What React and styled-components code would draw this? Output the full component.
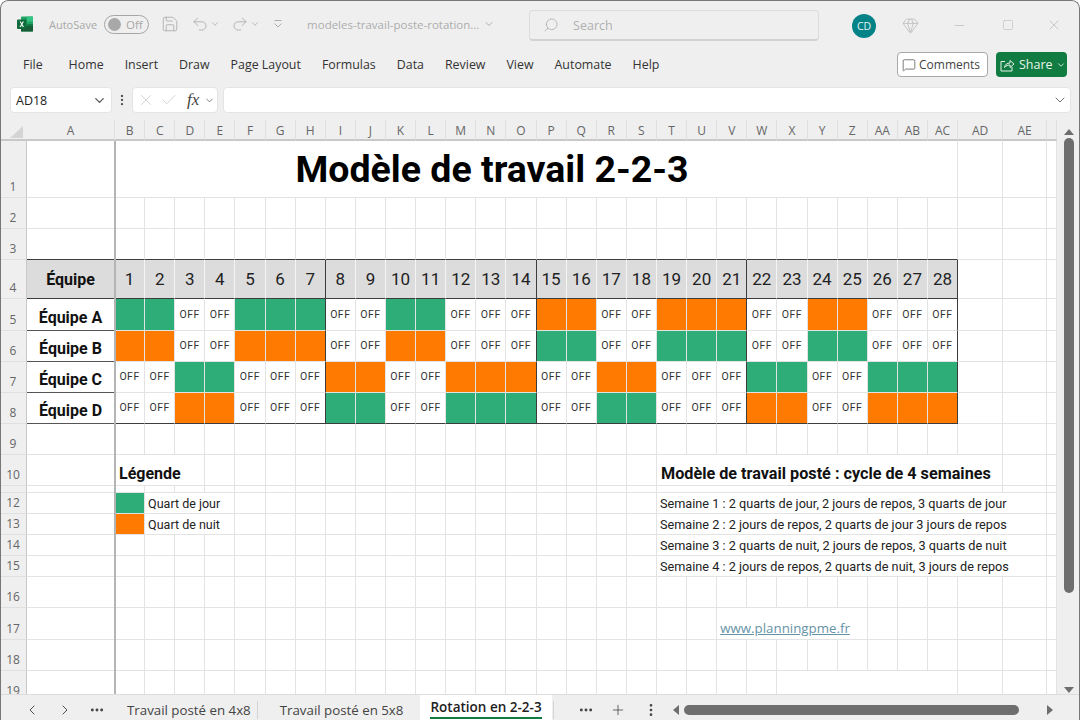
import styled, { createGlobalStyle } from 'styled-components';
import {
  Search, Save, Undo2, Redo2, ChevronDown, ChevronLeft, ChevronRight, X, Check, Minus, Square,
  Gem, MessageSquare, Plus, MoreVertical, MoreHorizontal,
} from 'lucide-react';

const UI_FONT = '"Open Sans", "Noto Sans", sans-serif';
const SHEET_FONT = 'Roboto, "Liberation Sans", sans-serif';
const GRID_LINE = '#e3e3e3';
const DARK_LINE = '#3c3c3c';
const GREEN = '#2fad78';
const ORANGE = '#ff7a00';

const GlobalStyle = createGlobalStyle`
  html, body { margin: 0; padding: 0; background: #fff; }
  * { box-sizing: border-box; }
`;

const Window = styled.div`
  position: relative;
  width: 1080px;
  height: 720px;
  overflow: hidden;
  display: flex;
  flex-direction: column;
  background: #efefef;
  font-family: ${UI_FONT};
  border-radius: 8px 8px 0 0;

  &::after {
    content: '';
    position: absolute;
    inset: 0;
    border: 1px solid #777;
    border-bottom: none;
    border-radius: 8px 8px 0 0;
    pointer-events: none;
  }
`;

const TitleBar = styled.div`
  height: 44px;
  flex: none;
  display: flex;
  align-items: center;
  padding: 4px 0 0 17px;
  color: #a9a9a9;
`;

const AutoSave = styled.span`
  font-size: 11px;
  margin-left: 16px;
  color: #a8a8a8;
`;

const Toggle = styled.div`
  width: 45px;
  height: 19px;
  margin-left: 7px;
  border: 1.5px solid #a6a6a6;
  border-radius: 10px;
  display: flex;
  align-items: center;
  gap: 5px;
  padding-left: 3px;
  font-size: 11.5px;
  color: #a8a8a8;

  &::before {
    content: '';
    width: 13px;
    height: 13px;
    border-radius: 50%;
    background: #a8a8a8;
  }
`;

const QatIcon = styled.span`
  display: inline-flex;
  align-items: center;
  margin-left: ${(p) => p.$left}px;
  color: #aeaeae;
`;

const FileName = styled.span`
  font-size: 11.5px;
  color: #adadad;
  margin-left: 24px;
  width: 176px;
  white-space: nowrap;
`;

const SearchBox = styled.div`
  width: 290px;
  height: 31px;
  margin: 3px 0 0 34px;
  border: 1px solid #dcdcdc;
  border-bottom: 2px solid #d2d2d2;
  border-radius: 4px;
  display: flex;
  align-items: center;
  gap: 14px;
  padding-left: 13px;
  font-size: 12.5px;
  color: #b0b0b0;

  svg { transform: scaleX(-1); }
`;

const Avatar = styled.div`
  width: 24px;
  height: 24px;
  margin: 4px 0 0 33px;
  border-radius: 50%;
  background: #038387;
  color: #e6f4f4;
  font-size: 10.5px;
  display: flex;
  align-items: center;
  justify-content: center;
`;

const WindowIcons = styled.div`
  display: flex;
  align-items: center;
  margin-top: 2px;
  color: #b4b4b4;
`;

const WindowIcon = styled.span`
  display: inline-flex;
  margin-left: ${(p) => p.$left}px;
`;

const MenuBar = styled.div`
  height: 40px;
  flex: none;
  display: flex;
  align-items: center;
  padding: 1px 13px 0 23px;
`;

const MenuItem = styled.span`
  font-size: 12.4px;
  color: #333;
  margin-right: ${(p) => p.$gap ?? 21}px;
`;

const MenuActions = styled.div`
  margin-left: auto;
  display: flex;
  gap: 8px;
`;

const CommentsButton = styled.div`
  width: 91px;
  height: 25px;
  background: #fff;
  border: 1px solid #a8a8a8;
  border-radius: 4px;
  display: flex;
  align-items: center;
  gap: 3px;
  padding-left: 4px;
  font-size: 12px;
  color: #444;
`;

const ShareButton = styled.div`
  width: 71px;
  height: 25px;
  background: #107c41;
  border-radius: 4px;
  display: flex;
  align-items: center;
  gap: 3px;
  padding-left: 2px;
  font-size: 12.5px;
  color: #e8f3ec;
`;

const FormulaBar = styled.div`
  height: 36px;
  flex: none;
  display: flex;
  align-items: flex-start;
  padding: 3px 9px 0 10px;
`;

const WhiteBox = styled.div`
  height: 26px;
  background: #fff;
  border: 1px solid #e4e4e4;
  border-radius: 4px;
  display: flex;
  align-items: center;
`;

const NameBox = styled(WhiteBox)`
  width: 102px;
  padding: 0 4px 0 5px;
  justify-content: space-between;
  font-size: 12.5px;
  color: #222;
`;

const Grip = styled.span`
  width: 20px;
  height: 26px;
  display: flex;
  justify-content: center;
  align-items: center;
  color: #555;
`;

const FunctionBox = styled(WhiteBox)`
  width: 86px;
  padding-left: 4px;
  gap: 5px;
  color: #c4c4c4;
`;

const FxLabel = styled.span`
  font-family: "Liberation Serif", serif;
  font-style: italic;
  font-size: 17px;
  color: #444;
  margin-left: 4px;
`;

const FormulaInput = styled(WhiteBox)`
  flex: 1;
  margin-left: 5px;
  justify-content: flex-end;
  padding-right: 2px;
  color: #666;
`;

const SheetArea = styled.div`
  flex: 1;
  min-height: 0;
  display: flex;
`;

const Sheet = styled.div`
  position: relative;
  width: 1057px;
  height: 574px;
  overflow: hidden;
  display: grid;
  grid-template-columns: 27px 88px repeat(28, 30.12px) 45px 44px 10px;
  grid-template-rows: 21px 57px 31px 31px 39px 32px 31px 31px 31px 31px 31px 7px 21px 21px 21px 21px 31px 32px 31px 31px;
  background: #fff;
  font-family: ${SHEET_FONT};
`;

const FrozenLine = styled.div`
  position: absolute;
  left: 114px;
  top: 21px;
  bottom: 0;
  width: 2px;
  background: #b4b4b4;
`;

const Corner = styled.div`
  background: #efefef;
  border-bottom: 2px solid #c8c8c8;
  padding: 6px 3px 0 10px;

  &::after {
    content: '';
    display: block;
    width: 13px;
    height: 12px;
    background: #d4d4d4;
    clip-path: polygon(100% 0, 100% 100%, 0 100%);
  }
`;

const ColHead = styled.div`
  background: #efefef;
  border-bottom: 2px solid #c8c8c8;
  border-right: 1px solid #e0e0e0;
  font-family: ${UI_FONT};
  font-size: 12px;
  color: #666;
  display: flex;
  align-items: center;
  justify-content: center;
  padding-top: 1px;
`;

const RowHead = styled.div`
  background: #efefef;
  border-bottom: 1px solid #e0e0e0;
  border-right: 1px solid #c8c8c8;
  font-family: ${UI_FONT};
  font-size: 12px;
  line-height: 14px;
  color: #666;
  display: flex;
  align-items: flex-end;
  justify-content: center;
  padding-bottom: 3px;
  overflow: hidden;
`;

const Cell = styled.div`
  grid-column: span ${(p) => p.$span || 1};
  min-width: 0;
  background: ${(p) => p.$fill || '#fff'};
  border-right: 1px solid ${(p) => p.$right || GRID_LINE};
  border-bottom: 1px solid ${(p) => p.$bottom || GRID_LINE};
  display: flex;
  align-items: center;
  justify-content: ${(p) => p.$justify || 'center'};
  padding-left: ${(p) => p.$pad || 0}px;
  white-space: nowrap;
  color: #222;
`;

const Title = styled.span`
  font-size: 37.5px;
  font-weight: 700;
  color: #000;
`;

const HeadText = styled.span`
  font-size: ${(p) => p.$size || 16}px;
  font-weight: 700;
  color: #111;
  padding-top: ${(p) => p.$top || 0}px;
`;

const DayNumber = styled.span`
  font-size: 17px;
  color: #222;
`;

const OffText = styled.span`
  font-size: 10.5px;
  letter-spacing: 0.5px;
  color: #333;
  margin-bottom: 1px;
`;

const NoteText = styled.span`
  font-size: ${(p) => p.$size || 12.5}px;
  color: #222;
`;

const SiteLink = styled.span`
  font-family: ${UI_FONT};
  font-size: 13.3px;
  color: #6593a6;
  text-decoration: underline;
  padding-top: 8px;
`;

const VScroll = styled.div`
  flex: 1;
  display: flex;
  flex-direction: column;
  align-items: center;
  padding: 9px 0 0 1px;
`;

const Arrow = styled.div`
  width: 0;
  height: 0;
  ${(p) => p.$dir === 'up' && 'border-left: 5px solid transparent; border-right: 5px solid transparent; border-bottom: 6px solid #6e6e6e;'}
  ${(p) => p.$dir === 'down' && 'border-left: 5px solid transparent; border-right: 5px solid transparent; border-top: 6px solid #6e6e6e;'}
  ${(p) => p.$dir === 'left' && 'border-top: 5px solid transparent; border-bottom: 5px solid transparent; border-right: 6px solid #6e6e6e;'}
  ${(p) => p.$dir === 'right' && 'border-top: 5px solid transparent; border-bottom: 5px solid transparent; border-left: 6px solid #6e6e6e;'}
`;

const VThumb = styled.div`
  width: 10px;
  height: 455px;
  margin-top: 3px;
  background: #6e6e6e;
  border-radius: 5px;
`;

const VDown = styled.div`
  margin-top: auto;
  margin-bottom: 1px;
`;

const TabStrip = styled.div`
  height: 26px;
  flex: none;
  display: flex;
  align-items: center;
  border-top: 1px solid #dcdcdc;
  padding-top: 4px;
`;

const NavIcon = styled.span`
  display: inline-flex;
  margin-left: ${(p) => p.$left}px;
  color: #444;
`;

const Tab = styled.span`
  font-size: 13.3px;
  color: #444;
  margin-left: ${(p) => p.$left}px;
  white-space: nowrap;
`;

const TabDivider = styled.span`
  width: 1px;
  height: 18px;
  background: #d4d4d4;
  margin-left: ${(p) => p.$left}px;
`;

const ActiveTab = styled.div`
  width: 132px;
  align-self: stretch;
  margin: -4px 0 0 17px;
  background: #fff;
  padding: 3px 0 0 10px;
  font-size: 13.5px;
  font-weight: 600;
  line-height: 18px;
  color: #222;
  white-space: nowrap;

  span {
    display: inline-block;
    height: 21px;
    border-bottom: 2px solid #107c41;
  }
`;

const HThumb = styled.div`
  width: 335px;
  height: 10px;
  margin-left: 5px;
  background: #6e6e6e;
  border-radius: 5px;
`;

const HArrow = styled.span`
  display: block;
  margin-left: ${(p) => p.$left}px;
`;

const COLUMNS = [
  'A', 'B', 'C', 'D', 'E', 'F', 'G', 'H', 'I', 'J', 'K', 'L', 'M', 'N', 'O', 'P', 'Q', 'R', 'S',
  'T', 'U', 'V', 'W', 'X', 'Y', 'Z', 'AA', 'AB', 'AC', 'AD', 'AE', '',
];

const ROW_LABELS = [1, 2, 3, 4, 5, 6, 7, 8, 9, 10, '', 12, 13, 14, 15, 16, 17, 18, 19];

// shift pattern per team, one letter per day (G = day, N = night, O = off)
const TEAMS = {
  5: { name: 'Équipe A', days: 'GGOOGGGOOGGOOONNOONNNOONNOOO' },
  6: { name: 'Équipe B', days: 'NNOONNNOONNOOOGGOOGGGOOGGOOO' },
  7: { name: 'Équipe C', days: 'OOGGOOONNOONNNOONNOOOGGOOGGG' },
  8: { name: 'Équipe D', days: 'OONNOOOGGOOGGGOOGGOOONNOONNN' },
};

const WEEK_NOTES = {
  12: 'Semaine 1 : 2 quarts de jour, 2 jours de repos, 3 quarts de jour',
  13: 'Semaine 2 : 2 jours de repos, 2 quarts de jour 3 jours de repos',
  14: 'Semaine 3 : 2 quarts de nuit, 2 jours de repos, 3 quarts de nuit',
  15: 'Semaine 4 : 2 jours de repos, 2 quarts de nuit, 3 jours de repos',
};

const isWeekEnd = (col) => col >= 7 && col <= 28 && col % 7 === 0;

function blanks(row, from, to) {
  const cells = [];
  for (let col = from; col <= to; col += 1) cells.push(<Cell key={`${row}-${col}`} />);
  return cells;
}

function tableRow(row) {
  const cells = [];
  const bottom = row === 4 || row === 8 ? DARK_LINE : undefined;
  const nameBottom = row === 4 ? DARK_LINE : '#555';
  if (row === 4) {
    cells.push(<Cell key="a" $fill="#dcdcdc" $bottom={nameBottom}><HeadText>Équipe</HeadText></Cell>);
  } else {
    cells.push(<Cell key="a" $bottom={nameBottom}><HeadText $top={5}>{TEAMS[row].name}</HeadText></Cell>);
  }
  for (let col = 1; col <= 28; col += 1) {
    const right = isWeekEnd(col) ? DARK_LINE : undefined;
    if (row === 4) {
      cells.push(
        <Cell key={col} $fill="#dcdcdc" $right={right || '#f4f4f4'} $bottom={bottom}>
          <DayNumber>{col}</DayNumber>
        </Cell>
      );
    } else {
      const shift = TEAMS[row].days[col - 1];
      const fill = shift === 'G' ? GREEN : shift === 'N' ? ORANGE : undefined;
      cells.push(
        <Cell key={col} $fill={fill} $right={right} $bottom={bottom}>
          {shift === 'O' && <OffText>OFF</OffText>}
        </Cell>
      );
    }
  }
  return cells;
}

// cells for one sheet row, merged ranges get a span
function sheetRow(row) {
  if (row >= 4 && row <= 8) {
    return [...tableRow(row), ...blanks(row, 29, 31)];
  }
  if (row === 1) {
    return [
      <Cell key="title" $span={29}><Title>Modèle de travail 2-2-3</Title></Cell>,
      ...blanks(row, 29, 31),
    ];
  }
  if (row === 10) {
    return [
      ...blanks(row, 0, 0),
      <Cell key="legend" $span={3} $justify="flex-start" $pad={4}><HeadText $top={6}>Légende</HeadText></Cell>,
      ...blanks(row, 4, 18),
      <Cell key="cycle" $span={11} $justify="flex-start" $pad={4}>
        <HeadText $top={6} $size={16.2}>Modèle de travail posté : cycle de 4 semaines</HeadText>
      </Cell>,
      ...blanks(row, 30, 31),
    ];
  }
  if (row === 11) {
    return [...blanks(row, 0, 18), <Cell key="m" $span={11} />, ...blanks(row, 30, 31)];
  }
  if (row === 12 || row === 13) {
    return [
      ...blanks(row, 0, 0),
      <Cell key="swatch" $fill={row === 12 ? GREEN : ORANGE} />,
      <Cell key="label" $span={3} $justify="flex-start" $pad={3}>
        <NoteText>{row === 12 ? 'Quart de jour' : 'Quart de nuit'}</NoteText>
      </Cell>,
      ...blanks(row, 5, 18),
      <Cell key="note" $span={12} $justify="flex-start" $pad={3}><NoteText $size={12.7}>{WEEK_NOTES[row]}</NoteText></Cell>,
      ...blanks(row, 31, 31),
    ];
  }
  if (row === 14 || row === 15) {
    return [
      ...blanks(row, 0, 18),
      <Cell key="note" $span={12} $justify="flex-start" $pad={3}><NoteText $size={12.7}>{WEEK_NOTES[row]}</NoteText></Cell>,
      ...blanks(row, 31, 31),
    ];
  }
  if (row === 17) {
    return [
      ...blanks(row, 0, 20),
      <Cell key="link" $span={5} $justify="flex-start" $pad={3}><SiteLink>www.planningpme.fr</SiteLink></Cell>,
      ...blanks(row, 26, 31),
    ];
  }
  if (row === 19) {
    return [...blanks(row, 0, 22), <Cell key="m" $span={6} />, ...blanks(row, 29, 31)];
  }
  const bottom = row === 3 ? DARK_LINE : undefined;
  return COLUMNS.map((_, col) => <Cell key={col} $bottom={col <= 28 ? bottom : undefined} />);
}

function ExcelLogo() {
  return (
    <svg width="16" height="16" viewBox="0 0 16 16">
      <rect x="4" y="0.5" width="12" height="15" rx="1" fill="#21a366" />
      <rect x="10" y="0.5" width="6" height="5" fill="#33c481" />
      <rect x="10" y="8" width="6" height="4" fill="#107c41" />
      <rect x="4" y="10" width="12" height="5.5" fill="#185c37" />
      <rect x="0" y="3.5" width="9.5" height="9.5" rx="1" fill="#0f6b3a" />
      <path d="M2.6 5.6 L4.2 8.2 L2.5 10.9 H3.8 L4.8 9.2 L5.8 10.9 H7 L5.4 8.2 L7 5.6 H5.8 L4.8 7.3 L3.8 5.6 Z" fill="#fff" />
    </svg>
  );
}

function CustomizeIcon() {
  return (
    <svg width="10" height="10" viewBox="0 0 10 10" fill="none" stroke="currentColor" strokeWidth="1">
      <path d="M1.5 1.5 H8.5" />
      <path d="M1.5 4.5 L5 8 L8.5 4.5" />
    </svg>
  );
}

function ShareIcon() {
  return (
    <svg width="18" height="16" viewBox="0 0 18 16" fill="none" stroke="#e8f3ec" strokeWidth="1">
      <path d="M7 4.5 H3 V14 H14 V10" />
      <path d="M6.5 10.5 C7 7.5 9 6 12 6 V3.5 L16 7 L12 10.5 V8 C10 8 8 8.5 6.5 10.5 Z" />
    </svg>
  );
}

export default function App() {
  return (
    <>
      <GlobalStyle />
      <Window>
        <TitleBar>
          <ExcelLogo />
          <AutoSave>AutoSave</AutoSave>
          <Toggle>Off</Toggle>
          <QatIcon $left={12}><Save size={18} strokeWidth={1.2} /></QatIcon>
          <QatIcon $left={12}><Undo2 size={18} strokeWidth={1.2} /></QatIcon>
          <QatIcon $left={1}><ChevronDown size={10} /></QatIcon>
          <QatIcon $left={11}><Redo2 size={18} strokeWidth={1.2} /></QatIcon>
          <QatIcon $left={1}><ChevronDown size={10} /></QatIcon>
          <QatIcon $left={13}><CustomizeIcon /></QatIcon>
          <FileName>modeles-travail-poste-rotation...</FileName>
          <QatIcon $left={0}><ChevronDown size={12} /></QatIcon>
          <SearchBox><Search size={16} strokeWidth={1.3} />Search</SearchBox>
          <Avatar>CD</Avatar>
          <WindowIcons>
            <WindowIcon $left={26}><Gem size={17} strokeWidth={1} /></WindowIcon>
            <WindowIcon $left={33}><Minus size={15} strokeWidth={1} /></WindowIcon>
            <WindowIcon $left={35}><Square size={12} strokeWidth={1} /></WindowIcon>
            <WindowIcon $left={32}><X size={16} strokeWidth={1} /></WindowIcon>
          </WindowIcons>
        </TitleBar>

        <MenuBar>
          <MenuItem $gap={26}>File</MenuItem>
          <MenuItem>Home</MenuItem>
          <MenuItem>Insert</MenuItem>
          <MenuItem>Draw</MenuItem>
          <MenuItem>Page Layout</MenuItem>
          <MenuItem>Formulas</MenuItem>
          <MenuItem>Data</MenuItem>
          <MenuItem>Review</MenuItem>
          <MenuItem>View</MenuItem>
          <MenuItem>Automate</MenuItem>
          <MenuItem>Help</MenuItem>
          <MenuActions>
            <CommentsButton><MessageSquare size={14} strokeWidth={1.2} />Comments</CommentsButton>
            <ShareButton><ShareIcon />Share<ChevronDown size={10} /></ShareButton>
          </MenuActions>
        </MenuBar>

        <FormulaBar>
          <NameBox>AD18<ChevronDown size={15} color="#555" /></NameBox>
          <Grip><MoreVertical size={14} /></Grip>
          <FunctionBox>
            <X size={18} strokeWidth={1} />
            <Check size={18} strokeWidth={1} />
            <FxLabel>fx</FxLabel>
            <ChevronDown size={11} color="#777" />
          </FunctionBox>
          <FormulaInput><ChevronDown size={16} strokeWidth={1.4} /></FormulaInput>
        </FormulaBar>

        <SheetArea>
          <Sheet>
            <Corner />
            {COLUMNS.map((name, i) => <ColHead key={i}>{name}</ColHead>)}
            {ROW_LABELS.map((label, i) => {
              const row = i + 1;
              return [<RowHead key={`head-${row}`}>{label}</RowHead>, ...sheetRow(row).map((c, j) => (
                <c.type key={`${row}-${j}`} {...c.props} />
              ))];
            })}
            <FrozenLine />
          </Sheet>
          <VScroll>
            <Arrow $dir="up" />
            <VThumb />
            <VDown><Arrow $dir="down" /></VDown>
          </VScroll>
        </SheetArea>

        <TabStrip>
          <NavIcon $left={24}><ChevronLeft size={16} strokeWidth={1.4} /></NavIcon>
          <NavIcon $left={17}><ChevronRight size={16} strokeWidth={1.4} /></NavIcon>
          <NavIcon $left={16}><MoreHorizontal size={16} strokeWidth={2.4} /></NavIcon>
          <Tab $left={22}>Travail posté en 4x8</Tab>
          <TabDivider $left={6} />
          <Tab $left={22}>Travail posté en 5x8</Tab>
          <ActiveTab><span>Rotation en 2-2-3</span></ActiveTab>
          <TabDivider $left={1} />
          <NavIcon $left={24}><MoreHorizontal size={16} strokeWidth={2.4} /></NavIcon>
          <NavIcon $left={16}><Plus size={16} strokeWidth={1.2} /></NavIcon>
          <NavIcon $left={17}><MoreVertical size={16} strokeWidth={2} /></NavIcon>
          <HArrow $left={14}><Arrow $dir="left" /></HArrow>
          <HThumb />
          <HArrow $left={28}><Arrow $dir="right" /></HArrow>
        </TabStrip>
      </Window>
    </>
  );
}
